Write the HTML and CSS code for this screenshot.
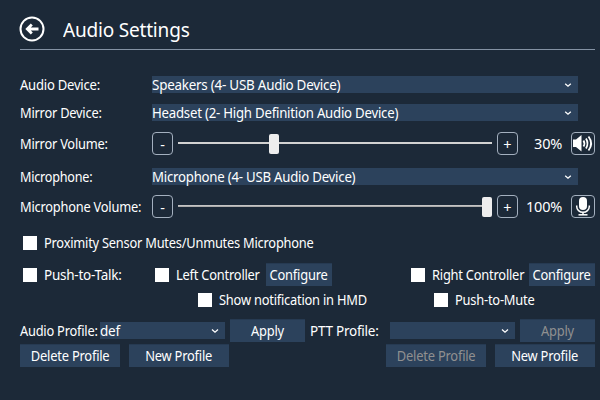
FILE: index.html
```html
<!DOCTYPE html>
<html lang="en">
<head>
<meta charset="utf-8">
<title>Audio Settings</title>
<link rel="stylesheet" href="styles.css">
</head>
<body>
<main class="page">
  <header class="header">
    <svg class="back" viewBox="0 0 26 26"><circle cx="13" cy="13" r="11.500" fill="none" stroke="#fff" stroke-width="2"/><path d="M8 13H19.500M12.800 8.500L8.300 13L12.800 17.500" fill="none" stroke="#fff" stroke-width="2.800"/></svg>
    <h1 class="title">Audio Settings</h1>
  </header>

  <section class="devices">
    <div class="row row-device">
      <span class="label t-ad">Audio Device:</span>
      <div class="combo"><span class="t-sp">Speakers (4- USB Audio Device)</span><svg class="chev" viewBox="0 0 8 6"><path d="M1.200 1.800L4 4.200L6.800 1.800"/></svg></div>
    </div>
    <div class="row row-mirror">
      <span class="label t-md">Mirror Device:</span>
      <div class="combo"><span class="t-hs">Headset (2- High Definition Audio Device)</span><svg class="chev" viewBox="0 0 8 6"><path d="M1.200 1.800L4 4.200L6.800 1.800"/></svg></div>
    </div>
    <div class="row row-volume">
      <span class="label t-mv">Mirror Volume:</span>
      <div class="step">-</div>
      <div class="slider"><div class="fill-30"></div><div class="thumb"></div></div>
      <div class="step">+</div>
      <span class="percent">30%</span>
      <div class="icon-btn"><svg viewBox="0 0 24 23"><path d="M2 7.500H5L10.500 3V19.500L5 15H2Z" fill="#fff"/><path d="M12.500 8.500Q14.300 11.500 12.500 14.500M15 6.500Q18 11.500 15 16.500M17.500 4.500Q22.800 11.500 17.500 18.500" fill="none" stroke="#fff" stroke-width="1.800"/></svg></div>
    </div>
    <div class="row row-mic">
      <span class="label t-mic">Microphone:</span>
      <div class="combo"><span class="t-mc">Microphone (4- USB Audio Device)</span><svg class="chev" viewBox="0 0 8 6"><path d="M1.200 1.800L4 4.200L6.800 1.800"/></svg></div>
    </div>
    <div class="row row-volume row-micvol">
      <span class="label t-micv">Microphone Volume:</span>
      <div class="step">-</div>
      <div class="slider slider-full"><div class="thumb"></div></div>
      <div class="step">+</div>
      <span class="percent">100%</span>
      <div class="icon-btn"><svg viewBox="0 0 24 23"><rect x="8" y="2" width="8" height="13" rx="4" fill="#fff"/><path d="M5.700 10.500V11.500A6.300 5.800 0 0 0 18.300 11.500V10.500M12 17V20" fill="none" stroke="#fff" stroke-width="1.500"/><path d="M7.500 19.800H16.500" stroke="#fff" stroke-width="1.500"/></svg></div>
    </div>
  </section>

  <section class="options">
    <div class="opt opt-prox"><i class="box"></i><span class="t-prox">Proximity Sensor Mutes/Unmutes Microphone</span></div>
    <div class="opt opt-ptt">
      <i class="box"></i><span class="ptt t-ptt">Push-to-Talk:</span>
      <i class="box"></i><span class="left t-lc">Left Controller</span>
      <div class="btn btn-conf"><span class="t-conf">Configure</span></div>
      <i class="box box-right"></i><span class="right t-rc">Right Controller</span>
      <div class="btn btn-conf btn-end"><span class="t-conf">Configure</span></div>
    </div>
    <div class="opt opt-sub"><i class="box"></i><span class="notify t-sn">Show notification in HMD</span><i class="box"></i><span class="t-pm">Push-to-Mute</span></div>
  </section>

  <section class="profiles">
    <div class="profile">
      <div class="pick"><span class="plabel t-ap">Audio Profile:</span><div class="combo combo-sm"><span class="t-def">def</span><svg class="chev" viewBox="0 0 8 6"><path d="M1 1.500L4 4.200L7 1.500"/></svg></div><div class="btn btn-apply"><span class="t-apply">Apply</span></div></div>
      <div class="acts"><div class="btn btn-prof"><span class="t-del">Delete Profile</span></div><div class="btn btn-prof"><span class="t-new">New Profile</span></div></div>
    </div>
    <div class="profile">
      <div class="pick"><span class="plabel t-pp">PTT Profile:</span><div class="combo combo-sm"><span></span><svg class="chev" viewBox="0 0 8 6"><path d="M1 1.500L4 4.200L7 1.500"/></svg></div><div class="btn btn-apply off"><span class="t-apply">Apply</span></div></div>
      <div class="acts acts-end"><div class="btn btn-prof off"><span class="t-del">Delete Profile</span></div><div class="btn btn-prof"><span class="t-new">New Profile</span></div></div>
    </div>
  </section>
</main>
</body>
</html>
```
FILE: styles.css
```css
* { box-sizing: border-box; }
body { margin: 0; background: #1c2938; }
.page {
  width: 600px; height: 400px; padding: 0 5px 0 20px; overflow: hidden;
  background: #1c2938; color: #fff;
  font: 14.5px/18px "Noto Sans", "Open Sans", sans-serif;
  letter-spacing: -0.25px; white-space: nowrap;
}
.header { display: flex; align-items: center; height: 50px; padding-top: 10px; border-bottom: 1px solid #8492a4; }
.back { width: 26px; height: 26px; margin: -1px 0 0 -1px; }
.title { margin: 1px 0 0 18px; font-size: 20px; font-weight: 400; line-height: 28px; letter-spacing: -0.2px; transform: scaleX(0.95); transform-origin: left; }

.row { display: flex; align-items: center; }
.label { width: 132px; flex: none; }
.row-device { height: 17px; margin-top: 26px; }
.row-mirror { height: 17px; margin-top: 11px; }
.row-volume { height: 23px; margin-top: 11px; }
.row-mic { height: 17px; margin-top: 13px; }
.row-micvol { margin-top: 10px; }
.combo { display: flex; align-items: center; justify-content: space-between; width: 426px; height: 17px; padding-right: 6px; background: #2c425c; }
.chev { width: 8px; height: 6px; fill: none; stroke: #fff; stroke-width: 1.3; }
.step { display: flex; justify-content: center; align-items: center; width: 21px; height: 23px; border: 1px solid #a4b0bf; border-radius: 4px; letter-spacing: 0; }
.slider { display: flex; align-items: center; width: 314px; height: 23px; margin: 0 5px; background: linear-gradient(#d2d2d2, #d2d2d2) 0 10px / 314px 2px no-repeat; }
.slider-full { justify-content: flex-end; background-image: linear-gradient(#d0d0d0, #a0a0a0); }
.fill-30 { width: 91px; }
.thumb { width: 10px; height: 20px; border-radius: 2px; background: #eee; }
.percent { width: 44px; margin-right: 9px; text-align: right; }
.icon-btn { width: 24px; height: 23px; border: 1px solid #a4b0bf; border-radius: 4px; }
.icon-btn svg { display: block; width: 24px; height: 23px; margin: -1px; }

.opt { display: flex; align-items: center; }
.opt > * { flex: none; }
.box { width: 14px; height: 14px; margin-right: 7px; background: #fff; }
.opt-prox { height: 16px; margin-top: 17px; padding-left: 3px; }
.opt-ptt { height: 23px; margin-top: 12px; padding-left: 3px; }
.opt-sub { height: 16px; margin-top: 6px; padding-left: 178px; }
.ptt { width: 111px; }
.left { width: 89.5px; }
.right { width: 97px; }
.box-right { margin-left: 79.5px; }
.notify { width: 215px; }
.btn { display: flex; align-items: center; justify-content: center; height: 23px; background: #2c425c; border-top: 1px solid #263a52; }
.btn-conf { width: 66px; }
.btn-end { margin-left: auto; }
.off { color: #909090; }

.profiles { display: flex; justify-content: space-between; margin-top: 11px; }
.profile { width: 285px; }
.pick { display: flex; align-items: center; }
.plabel { width: 80px; flex: none; }
.combo-sm { width: 125px; }
.btn-apply { width: 75px; margin-left: 5px; }
.acts { display: flex; gap: 9px; margin-top: 2px; }
.acts-end { justify-content: flex-end; }
.btn-prof { width: 100px; }

/* Condensed text widths */
span { transform-origin: left; translate: 0 -1px; }
.t-ad { transform: scaleX(0.9); }
.t-md, .t-mv, .t-micv, .t-prox { transform: scaleX(0.885); }
.t-mic { transform: scaleX(0.87); }
.t-sp { transform: scaleX(0.925); }
.t-hs, .t-mc { transform: scaleX(0.911); }
.t-ptt, .t-pp, .t-def { transform: scaleX(0.93); }
.t-lc, .t-rc, .t-sn, .t-pm { transform: scaleX(0.888); }
.t-ap { transform: scaleX(0.885); }
.t-conf, .t-apply, .t-del, .t-new { transform: scaleX(0.89); transform-origin: center; }
```
